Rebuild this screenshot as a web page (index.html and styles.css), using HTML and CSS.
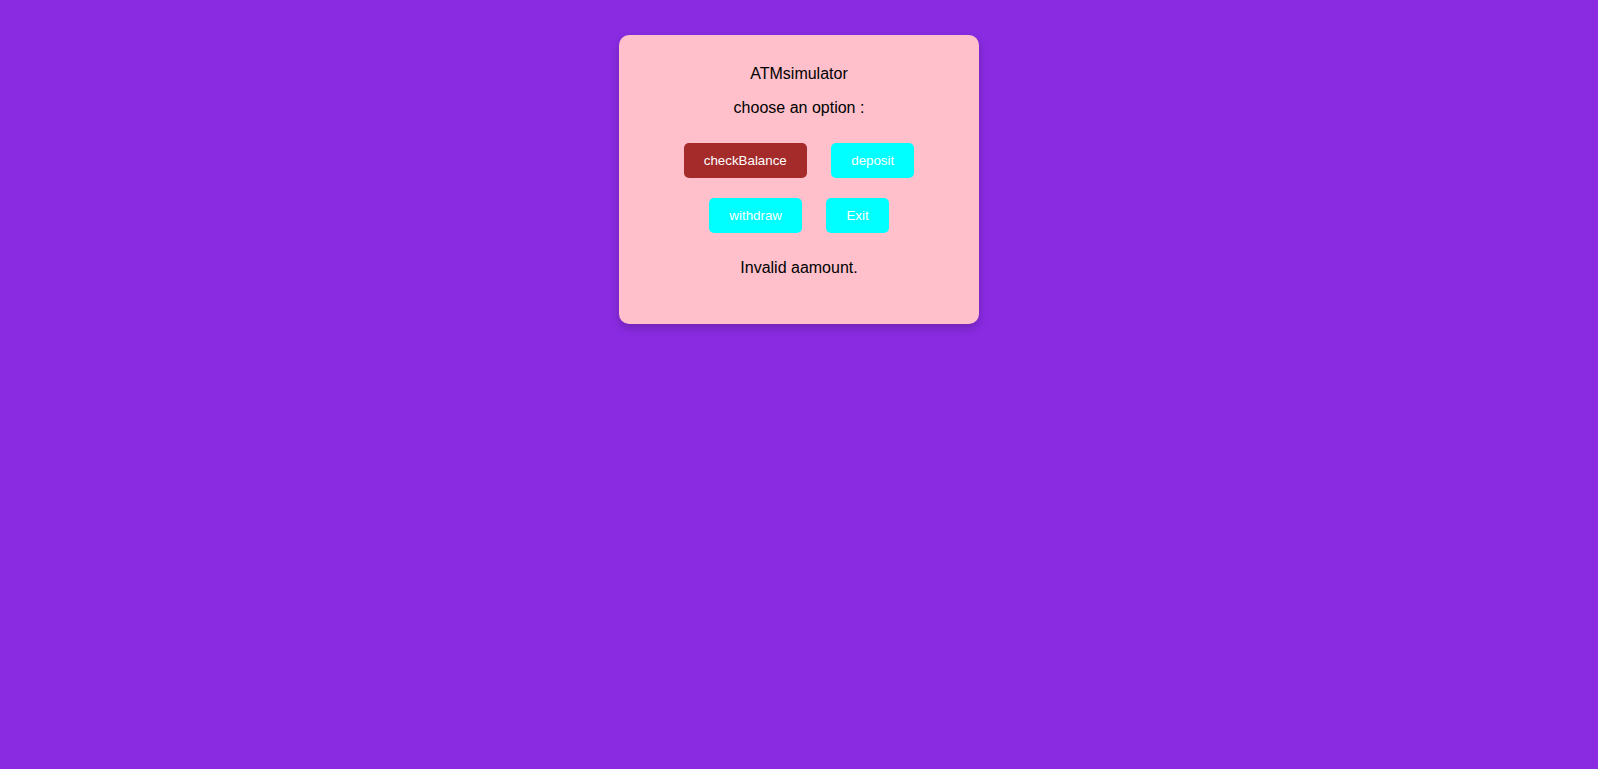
FILE: index.html
```html
<!DOCTYPE html>
<html>
<head>
<meta charset="utf-8">
<link rel="stylesheet" href="styles.css">
</head>
<body>
<div class="atm">
  <div class="title">ATMsimulator</div>
  <p class="prompt">choose an option :</p>
  <div class="buttons">
    <button class="btn btn-active">checkBalance</button>
    <button class="btn">deposit</button>
    <button class="btn">withdraw</button>
    <button class="btn">Exit</button>
  </div>
  <p class="message">Invalid aamount.</p>
</div>
</body>
</html>
```
FILE: styles.css
```css
html, body {
  margin: 0;
  padding: 0;
}
body {
  background: #8a2be2;
  font-family: "Liberation Sans", Arial, sans-serif;
  font-size: 16px;
  color: #000;
  padding-top: 35px;
  min-height: 769px;
  box-sizing: border-box;
}
.atm {
  width: 300px;
  margin: 0 auto;
  padding: 30px;
  background: #ffc0cb;
  border-radius: 10px;
  box-shadow: 0 4px 10px rgba(0, 0, 0, 0.2);
  text-align: center;
}
.title {
  margin: 0;
}
.prompt {
  margin: 16px 0;
}
.message {
  margin: 16px 0 17px;
}
.btn {
  font-family: "Liberation Sans", Arial, sans-serif;
  font-size: 13.333px;
  padding: 10px 20px;
  margin: 10px;
  border: none;
  border-radius: 5px;
  background: #00ffff;
  color: #fff;
  cursor: pointer;
}
.btn-active {
  background: #a52a2a;
}
```
